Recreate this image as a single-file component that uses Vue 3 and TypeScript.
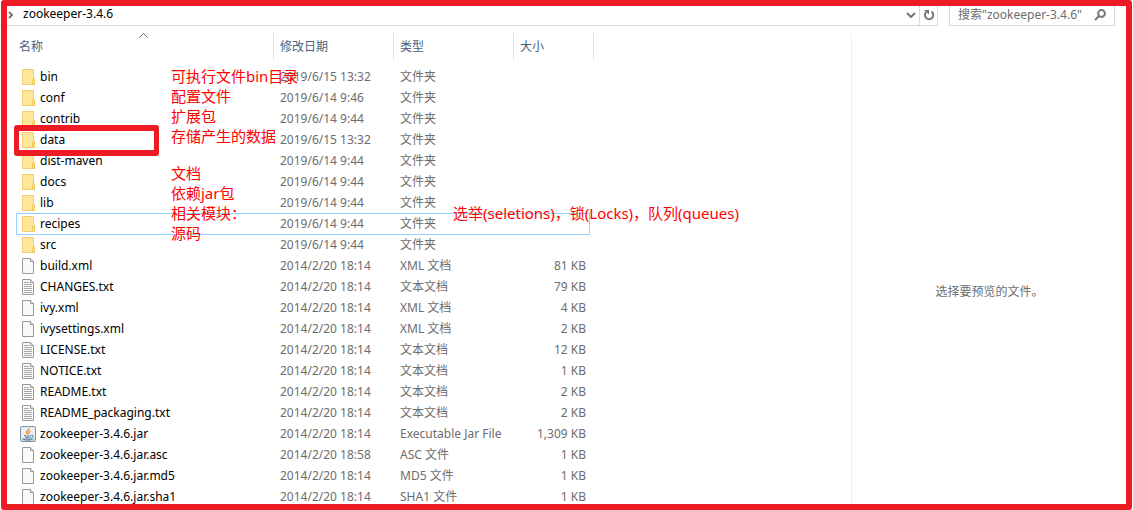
<script setup lang="ts">
import { ref } from 'vue'

type Kind = 'folder' | 'blank' | 'text' | 'jar'

interface Entry {
  name: string
  date: string
  type: string
  size: string
  kind: Kind
}

const folder = (name: string, date = '2019/6/14 9:44'): Entry => ({ name, date, type: '文件夹', size: '', kind: 'folder' })
const file = (name: string, type: string, size: string, kind: Kind, date = '2014/2/20 18:14'): Entry => ({ name, date, type, size, kind })

const entries: Entry[] = [
  folder('bin', '2019/6/15 13:32'),
  folder('conf', '2019/6/14 9:46'),
  folder('contrib'),
  folder('data', '2019/6/15 13:32'),
  folder('dist-maven'),
  folder('docs'),
  folder('lib'),
  folder('recipes'),
  folder('src'),
  file('build.xml', 'XML 文档', '81 KB', 'blank'),
  file('CHANGES.txt', '文本文档', '79 KB', 'text'),
  file('ivy.xml', 'XML 文档', '4 KB', 'blank'),
  file('ivysettings.xml', 'XML 文档', '2 KB', 'blank'),
  file('LICENSE.txt', '文本文档', '12 KB', 'text'),
  file('NOTICE.txt', '文本文档', '1 KB', 'text'),
  file('README.txt', '文本文档', '2 KB', 'text'),
  file('README_packaging.txt', '文本文档', '2 KB', 'text'),
  file('zookeeper-3.4.6.jar', 'Executable Jar File', '1,309 KB', 'jar'),
  file('zookeeper-3.4.6.jar.asc', 'ASC 文件', '1 KB', 'blank', '2014/2/20 18:58'),
  file('zookeeper-3.4.6.jar.md5', 'MD5 文件', '1 KB', 'blank'),
  file('zookeeper-3.4.6.jar.sha1', 'SHA1 文件', '1 KB', 'blank'),
]

const focused = 'recipes'
const query = ref('')
const upperNotes = ['可执行文件bin目录', '配置文件', '扩展包', '存储产生的数据']
const lowerNotes = ['文档', '依赖jar包', '相关模块：', '源码']
</script>

<template>
  <div class="window">
    <header class="toolbar">
      <nav class="address" aria-label="地址">
        <svg class="crumb" viewBox="0 0 5 8" aria-hidden="true"><path d="M1 1l3 3-3 3" /></svg>
        <a class="path" href="#">zookeeper-3.4.6</a>
        <button class="drop" type="button" aria-label="以前的位置">
          <svg viewBox="0 0 10 6" width="10" height="6"><path d="M1 1l4 4 4-4" /></svg>
        </button>
        <button class="refresh" type="button" aria-label="刷新">
          <svg viewBox="0 0 12 12" width="12" height="12">
            <path d="M8.5 2.6A4.2 4.2 0 1 1 3.2 3" />
            <path class="tip" d="M1 1h5v4.600z" />
          </svg>
        </button>
      </nav>
      <div class="search">
        <input v-model="query" type="text" aria-label="搜索" placeholder='搜索"zookeeper-3.4.6"' />
        <svg viewBox="0 0 12 12" width="12" height="12" aria-hidden="true">
          <circle cx="7.500" cy="4.500" r="3.400" />
          <path d="M5 7L1 11" />
        </svg>
      </div>
    </header>

    <main class="body">
      <section class="files">
        <table>
          <colgroup>
            <col class="c-name" /><col class="c-date" /><col class="c-type" /><col class="c-size" />
          </colgroup>
          <thead>
            <tr>
              <th class="first">
                <button type="button">名称</button>
                <svg class="sort" viewBox="0 0 9 5" width="9" height="5" aria-hidden="true"><path d="M.5 4.500l4-4 4 4" /></svg>
              </th>
              <th><button type="button">修改日期</button></th>
              <th><button type="button">类型</button></th>
              <th><button type="button">大小</button></th>
            </tr>
          </thead>
          <tbody>
            <tr v-for="e in entries" :key="e.name" :class="{ focused: e.name === focused }">
              <td class="name">
                <div class="cell">
                  <svg v-if="e.kind === 'folder'" viewBox="0 0 16 16" width="16" height="16" aria-hidden="true">
                    <path d="M2.500.5h11v15h-11z" fill="#ffe69a" stroke="#f0cf6c" />
                    <path d="M12.500 15.500v-4.500l1-1.500h1v6z" fill="#ffe69a" stroke="#ebc65a" />
                  </svg>
                  <svg v-else-if="e.kind === 'jar'" viewBox="0 0 16 16" width="16" height="16" aria-hidden="true">
                    <rect x=".5" y=".5" width="15" height="15" rx="1" fill="#e9eff5" stroke="#7d93a8" />
                    <path d="M1 12h14v3H1z" fill="#c6d4e0" />
                    <path d="M9 2c1 2-3 2.500-2.500 4.500.2.800 1 1 .8 2M10.500 5C8.500 6 8.300 6.800 9 8" fill="none" stroke="#ee8325" stroke-width="1.300" />
                    <path d="M4 9.500c2 .8 5 .8 7 0M5 11.500c2 .6 4 .6 5.500 0M3 13.200c3 1 7 1 9.500 0M11.500 9.300c2.500-.3 2 1.700 0 2.200" fill="none" stroke="#46708f" />
                  </svg>
                  <svg v-else viewBox="0 0 16 16" width="16" height="16" aria-hidden="true">
                    <path d="M2.500.5h8l3 3v12h-11z" fill="#fafafa" stroke="#999" />
                    <path d="M10.500.5v3h3" fill="#e4e4e4" stroke="#999" />
                    <path v-if="e.kind === 'text'" d="M4 3.500h5M4 5.500h8M4 7.500h8M4 9.500h8M4 11.500h8M4 13.500h8" stroke="#a8a8a8" />
                  </svg>
                  <span>{{ e.name }}</span>
                </div>
              </td>
              <td>{{ e.date }}</td>
              <td>{{ e.type }}</td>
              <td class="size">{{ e.size }}</td>
            </tr>
          </tbody>
        </table>
      </section>
      <aside class="preview">选择要预览的文件。</aside>
    </main>

    <div class="mark"></div>
    <div class="notes upper"><div v-for="n in upperNotes" :key="n">{{ n }}</div></div>
    <div class="notes lower"><div v-for="n in lowerNotes" :key="n">{{ n }}</div></div>
    <div class="notes modules">选举(seletions)，锁(Locks)，队列(queues)</div>
    <div class="frame"></div>
  </div>
</template>

<style>
body {
  margin: 0;
  background: #fff;
}
</style>

<style scoped>
.window {
  position: relative;
  box-sizing: border-box;
  min-height: 100vh;
  padding-bottom: 3px;
  overflow: hidden;
  display: flex;
  flex-direction: column;
  background: #fff;
  color: #6d6d6d;
  font: 12px/20px "Noto Sans", "Noto Sans CJK SC", sans-serif;
}
button,
input {
  font: inherit;
  color: inherit;
  background: none;
  border: 0;
  padding: 0;
  margin: 0;
}
svg {
  flex: none;
  display: block;
}
.toolbar {
  display: flex;
  gap: 11px;
  height: 26px;
  padding-right: 18px;
}
.address {
  flex: 1;
  display: flex;
  align-items: center;
  border: solid #d9d9d9;
  border-width: 0 1px 1px 0;
  padding-left: 8px;
}
.crumb {
  width: 5px;
  height: 8px;
  padding-top: 4px;
}
.crumb path,
.drop path,
.refresh path,
.search path,
.search circle {
  fill: none;
  stroke: #767676;
  stroke-width: 2;
}
.path {
  flex: 1;
  margin-left: 10px;
  padding-top: 3px;
  color: #000;
  text-decoration: none;
}
.drop,
.refresh {
  display: flex;
  align-items: center;
  justify-content: center;
  height: 25px;
  padding-top: 4px;
}
.drop {
  width: 16px;
}
.refresh {
  width: 18px;
  border-left: 1px solid #d9d9d9;
}
.refresh .tip {
  fill: #767676;
  stroke: none;
}
.search {
  box-sizing: border-box;
  width: 166px;
  display: flex;
  align-items: center;
  border: solid #d9d9d9;
  border-width: 0 1px 1px;
  padding: 4px 8px 0;
}
.search input {
  flex: 1;
  min-width: 0;
  height: 20px;
  outline: 0;
}
.search input::placeholder {
  color: #6d6d6d;
  opacity: 1;
}
.body {
  flex: 1;
  display: flex;
  padding-top: 7px;
}
.files {
  flex: 1;
  padding-left: 16px;
}
table {
  table-layout: fixed;
  width: 578px;
  border-collapse: collapse;
}
.c-name {
  width: 258px;
}
.c-date,
.c-type {
  width: 120px;
}
.c-size {
  width: 80px;
}
th {
  position: relative;
  height: 33px;
  padding: 0;
  vertical-align: top;
  font-weight: 400;
}
th button {
  box-sizing: border-box;
  width: 100%;
  height: 27px;
  padding-left: 6px;
  border-right: 1px solid #e2e2e2;
  color: #4c607a;
  text-align: left;
}
th.first button {
  padding-left: 3px;
}
.sort {
  position: absolute;
  top: 0;
  left: 123px;
  fill: none;
  stroke: #6d6d6d;
}
td {
  height: 21px;
  padding: 0 0 0 6px;
  line-height: 21px;
  white-space: nowrap;
}
td.name {
  padding-left: 4px;
  color: #000;
}
td.size {
  padding: 0 8px 0 0;
  text-align: right;
}
.cell {
  display: flex;
  align-items: center;
  gap: 4px;
}
tr.focused {
  position: relative;
}
tr.focused::after {
  content: "";
  position: absolute;
  inset: 0 4px -1px 0;
  border: 1px solid #99d1ff;
}
.preview {
  box-sizing: border-box;
  width: 282px;
  display: flex;
  align-items: center;
  justify-content: center;
  padding: 44px 6px 0 0;
  border-left: 1px solid #f0f0f0;
}
.mark {
  position: absolute;
  left: 14px;
  top: 125px;
  box-sizing: border-box;
  width: 145px;
  height: 31px;
  border: solid #ed1c24;
  border-width: 6px 5px;
  border-radius: 3px;
}
.notes {
  position: absolute;
  left: 171px;
  color: #f00;
  font-size: 15px;
  line-height: 20px;
  white-space: nowrap;
}
.upper {
  top: 66px;
}
.lower {
  top: 163px;
}
.modules {
  left: 453px;
  top: 203px;
}
.frame {
  position: absolute;
  inset: 0 1px 0 1px;
  border: 6px solid #ed1c24;
  border-radius: 3px;
  pointer-events: none;
}
</style>
